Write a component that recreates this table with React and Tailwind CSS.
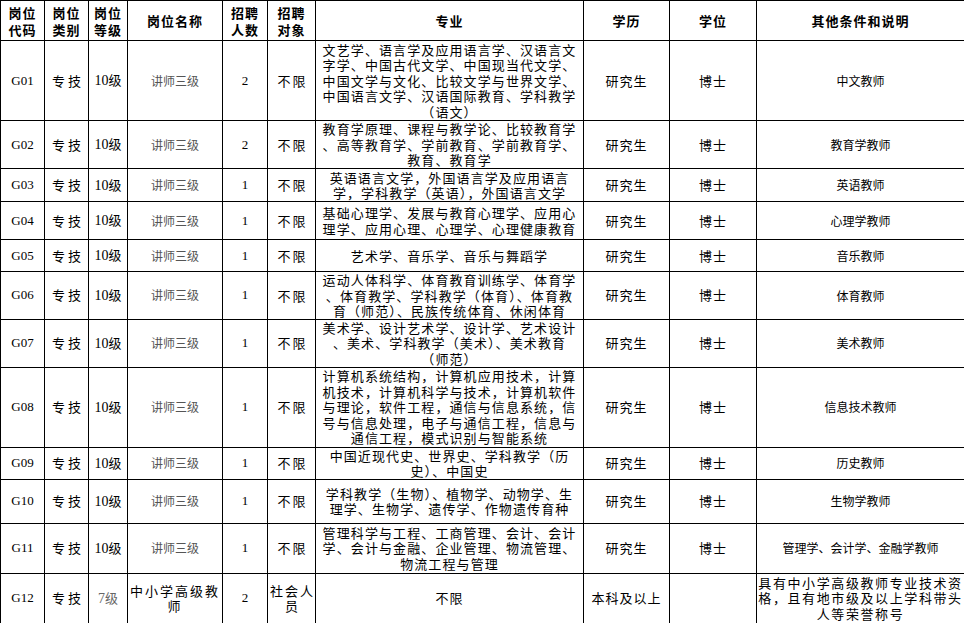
import React from 'react';

const cjk = '"Noto Sans CJK SC", "Liberation Sans", sans-serif';
const serif = '"Liberation Serif", "Noto Sans CJK SC", serif';

const rows = [
  {
    code: 'G01', level: '10级', name: '讲师三级', num: '2', target: '不限', h: 'h-[80px]',
    major: ['文艺学、语言学及应用语言学、汉语言文', '字学、中国古代文学、中国现当代文学、', '中国文学与文化、比较文学与世界文学、', '中国语言文学、汉语国际教育、学科教学', '（语文）'],
    edu: '研究生', degree: '博士', note: ['中文教师'],
  },
  {
    code: 'G02', level: '10级', name: '讲师三级', num: '2', target: '不限', h: 'h-[48px]',
    major: ['教育学原理、课程与教学论、比较教育学', '、高等教育学、学前教育、学前教育学、', '教育、教育学'],
    edu: '研究生', degree: '博士', note: ['教育学教师'],
  },
  {
    code: 'G03', level: '10级', name: '讲师三级', num: '1', target: '不限', h: 'h-[33px]',
    major: ['英语语言文学，外国语言学及应用语言', '学，学科教学（英语），外国语言文学'],
    edu: '研究生', degree: '博士', note: ['英语教师'],
  },
  {
    code: 'G04', level: '10级', name: '讲师三级', num: '1', target: '不限', h: 'h-[38px]',
    major: ['基础心理学、发展与教育心理学、应用心', '理学、应用心理、心理学、心理健康教育'],
    edu: '研究生', degree: '博士', note: ['心理学教师'],
  },
  {
    code: 'G05', level: '10级', name: '讲师三级', num: '1', target: '不限', h: 'h-[32px]',
    major: ['艺术学、音乐学、音乐与舞蹈学'],
    edu: '研究生', degree: '博士', note: ['音乐教师'],
  },
  {
    code: 'G06', level: '10级', name: '讲师三级', num: '1', target: '不限', h: 'h-[47px]',
    major: ['运动人体科学、体育教育训练学、体育学', '、体育教学、学科教学（体育）、体育教', '育（师范）、民族传统体育、休闲体育'],
    edu: '研究生', degree: '博士', note: ['体育教师'],
  },
  {
    code: 'G07', level: '10级', name: '讲师三级', num: '1', target: '不限', h: 'h-[48px]',
    major: ['美术学、设计艺术学、设计学、艺术设计', '、美术、学科教学（美术）、美术教育', '（师范）'],
    edu: '研究生', degree: '博士', note: ['美术教师'],
  },
  {
    code: 'G08', level: '10级', name: '讲师三级', num: '1', target: '不限', h: 'h-[80px]',
    major: ['计算机系统结构，计算机应用技术，计算', '机技术，计算机科学与技术，计算机软件', '与理论，软件工程，通信与信息系统，信', '号与信息处理，电子与通信工程，信息与', '通信工程，模式识别与智能系统'],
    edu: '研究生', degree: '博士', note: ['信息技术教师'],
  },
  {
    code: 'G09', level: '10级', name: '讲师三级', num: '1', target: '不限', h: 'h-[32px]',
    major: ['中国近现代史、世界史、学科教学（历', '史）、中国史'],
    edu: '研究生', degree: '博士', note: ['历史教师'],
  },
  {
    code: 'G10', level: '10级', name: '讲师三级', num: '1', target: '不限', h: 'h-[44px]',
    major: ['学科教学（生物）、植物学、动物学、生', '理学、生物学、遗传学、作物遗传育种'],
    edu: '研究生', degree: '博士', note: ['生物学教师'],
  },
  {
    code: 'G11', level: '10级', name: '讲师三级', num: '1', target: '不限', h: 'h-[50px]',
    major: ['管理科学与工程、工商管理、会计、会计', '学、会计与金融、企业管理、物流管理、', '物流工程与管理'],
    edu: '研究生', degree: '博士', note: ['管理学、会计学、金融学教师'],
  },
  {
    code: 'G12', level: '7级', name: '中小学高级教师', num: '2', target: '社会人员', h: 'h-[50px]',
    major: ['不限'],
    edu: '本科及以上', degree: '', note: ['具有中小学高级教师专业技术资', '格，且有地市级及以上学科带头', '人等荣誉称号'],
    last: true,
  },
];

const Lines = ({ lines }) =>
  lines.map((l, i) => (
    <React.Fragment key={i}>
      {i > 0 && <br />}
      {l}
    </React.Fragment>
  ));

const headers = [
  ['岗位', '代码'],
  ['岗位', '类别'],
  ['岗位', '等级'],
  ['岗位名称'],
  ['招聘', '人数'],
  ['招聘', '对象'],
  ['专业'],
  ['学历'],
  ['学位'],
  ['其他条件和说明'],
];

const td = 'border border-black p-0 text-center align-middle';

export default function App() {
  return (
    <div className="w-[964px] h-[623px] bg-white overflow-hidden text-black" style={{ fontFamily: cjk }}>
      <table className="table-fixed border-collapse w-[964px]">
        <colgroup>
          <col className="w-[44px]" />
          <col className="w-[44px]" />
          <col className="w-[39px]" />
          <col className="w-[95px]" />
          <col className="w-[45px]" />
          <col className="w-[48px]" />
          <col className="w-[268px]" />
          <col className="w-[86px]" />
          <col className="w-[87px]" />
          <col className="w-[208px]" />
        </colgroup>
        <thead>
          <tr>
            {headers.map((h, i) => (
              <th key={i} className={`${td} h-[40px] text-[13px] font-bold leading-[17px] tracking-[1px]`}>
                <Lines lines={h} />
              </th>
            ))}
          </tr>
        </thead>
        <tbody>
          {rows.map((r) => (
            <tr key={r.code}>
              <td className={`${td} ${r.h} text-[13px] leading-4`} style={{ fontFamily: serif }}>{r.code}</td>
              <td className={`${td} text-[13px] leading-4 tracking-[3px] pl-[3px]`}>专技</td>
              <td className={`${td} text-[13px] leading-4 ${r.last ? 'text-[#666]' : ''}`}>
                <span style={{ fontFamily: serif }} className="text-[14px]">{r.level.replace('级', '')}</span>级
              </td>
              <td className={`${td} text-[12px] leading-4 ${r.last ? 'text-[13px] tracking-[2px] leading-[15.5px] px-[2px]' : 'text-[#555]'}`}>
                {r.last ? <Lines lines={['中小学高级教', '师']} /> : r.name}
              </td>
              <td className={`${td} text-[13px] leading-4`} style={{ fontFamily: serif }}>{r.num}</td>
              <td className={`${td} text-[13px] leading-[15.5px] tracking-[2px] pl-[2px]`}>
                {r.last ? <Lines lines={['社会人', '员']} /> : r.target}
              </td>
              <td className={`${td} text-[13px] leading-[15.5px] tracking-[1.1px] whitespace-nowrap`}>
                <Lines lines={r.major} />
              </td>
              <td className={`${td} text-[13px] leading-4 tracking-[1px]`}>{r.edu}</td>
              <td className={`${td} text-[13px] leading-4 tracking-[1px]`}>{r.degree}</td>
              <td className={`${td} leading-[15.5px] whitespace-nowrap ${r.last ? 'text-[13px] tracking-[1.6px]' : 'text-[12px]'}`}>
                <Lines lines={r.note} />
              </td>
            </tr>
          ))}
        </tbody>
      </table>
    </div>
  );
}
